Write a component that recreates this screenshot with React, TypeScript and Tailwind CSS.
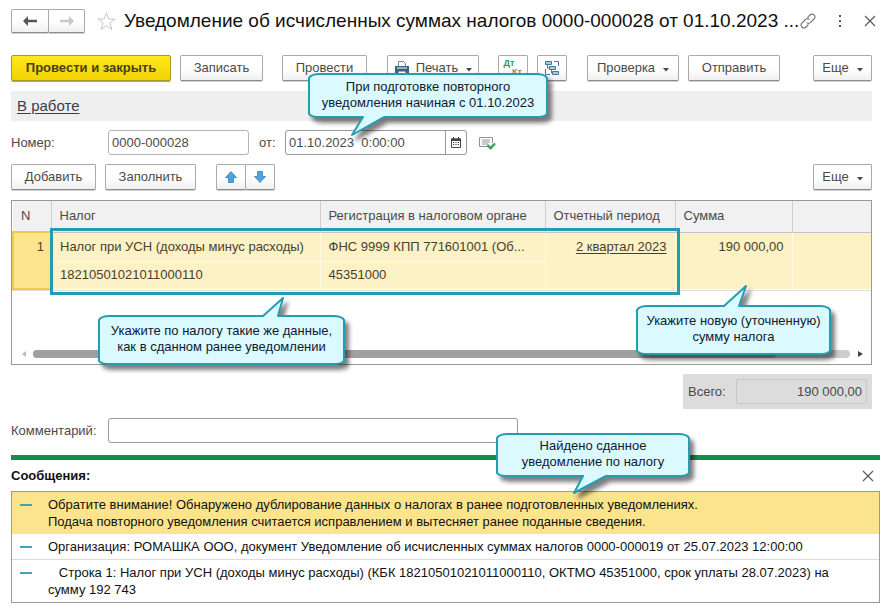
import type { ReactNode } from 'react';

const BUTTON = 'flex items-center justify-center rounded-[2px] border border-[#a9a9a9] border-b-[#8c8c8c] bg-linear-to-b from-white from-50% to-[#f0f0f0] text-[#4a4a4a] whitespace-nowrap shadow-[0_1px_0_#d0d0d0]';

// small triangle of the drop-down buttons
function Caret() {
    return (
        <svg className="mt-1 ml-2" width="6" height="4" viewBox="0 0 6 4" aria-hidden="true">
            <path d="M0 0h6L3 3.5z" fill="#4a4a4a" />
        </svg>
    );
}

function CloseIcon() {
    return (
        <svg width="12" height="12" viewBox="0 0 12 12" aria-hidden="true">
            <path d="M1 1l10 10M11 1L1 11" stroke="#555" strokeWidth="1.1" />
        </svg>
    );
}

interface CalloutProps {
    width: number;
    height: number;
    // three points: start of the tail, its tip, its end
    tail: [number, number][];
    side: 'top' | 'bottom';
    className: string;
    children: ReactNode;
}

function Callout({ width: w, height: h, tail, side, className, children }: CalloutProps) {
    const points = tail.map((p) => `L${p[0]} ${p[1]}`).join(' ');
    const top = side === 'top' ? points : '';
    const bottom = side === 'bottom' ? points : '';
    const d = `M1 5 Q3 1 12 1 ${top} L${w - 12} 1 Q${w - 3} 1 ${w - 1} 5 L${w - 1} ${h - 4} Q${w - 3} ${h - 1} ${w - 12} ${h - 1} ${bottom} L12 ${h - 1} Q3 ${h - 1} 1 ${h - 4} Z`;

    return (
        <div
            className={`absolute z-10 flex items-center justify-center pb-0.5 text-center leading-4 whitespace-nowrap text-[#101830] ${className}`}
            style={{ width: w, height: h }}
        >
            <svg className="absolute inset-0 overflow-visible drop-shadow-[4px_5px_2px_rgba(0,0,0,0.5)]" width={w} height={h} aria-hidden="true">
                <path d={d} fill="#dafaff" stroke="#239db1" strokeWidth="2" strokeLinejoin="round" />
            </svg>
            <p className="relative">{children}</p>
        </div>
    );
}

function Message({ active, children }: { active?: boolean; children: ReactNode }) {
    return (
        <li className={`flex items-start py-1 pr-4 leading-[17px] ${active ? 'bg-[#fce48c]' : 'border-b border-[#dcdcdc] bg-white last:border-b-0'}`}>
            <span className="mt-2 mr-4 ml-2 h-0.5 w-3 flex-none bg-[#46a0c0]" />
            <p className="whitespace-pre-wrap">{children}</p>
        </li>
    );
}

export default function App() {
    return (
        <main className="min-h-screen bg-white pt-[9px] pr-3 pl-[11px] font-['Liberation_Sans',Arial,sans-serif] text-[13px] leading-4 text-[#4a4a4a]">
            <div className="pr-2">
                {/* Title */}
                <header className="flex h-6 items-center">
                    <div className="flex flex-none">
                        <button aria-label="Назад" className={`${BUTTON} h-6 w-[38px]`}>
                            <svg width="14" height="10" viewBox="0 0 14 10" aria-hidden="true">
                                <path d="M0 5l5-5v3.8h9v2.4H5V10z" fill="#555" />
                            </svg>
                        </button>
                        <button aria-label="Вперед" className={`${BUTTON} -ml-px h-6 w-[37px]`}>
                            <svg width="14" height="10" viewBox="0 0 14 10" aria-hidden="true">
                                <path d="M14 5L9 0v3.8H0v2.4h9V10z" fill="#c8c8c8" />
                            </svg>
                        </button>
                    </div>
                    <button aria-label="В избранное" className="ml-3 flex-none">
                        <svg width="19" height="19" viewBox="0 0 19 19" aria-hidden="true">
                            <path d="M9.5 1l2.3 6h6.2l-5 3.9 1.9 6.6-5.4-4-5.4 4L6 10.9 1 7h6.2z" fill="#fff" stroke="#c6c6c6" />
                        </svg>
                    </button>
                    <h1 className="ml-2 min-w-0 truncate text-[19px] leading-6 text-[#111]">
                        Уведомление об исчисленных суммах налогов 0000-000028 от 01.10.2023 ...
                    </h1>
                    <div className="ml-auto flex flex-none items-center gap-4">
                        <button aria-label="Получить ссылку">
                            <svg width="16" height="16" viewBox="0 0 16 16" fill="none" stroke="#777" strokeWidth="1.1" aria-hidden="true">
                                <path d="M7.500 4.500L10 2a2.700 2.700 0 0 1 4 4l-3.500 3.500a2.700 2.700 0 0 1-4 0" />
                                <path d="M8.500 11.500L6 14a2.700 2.700 0 0 1-4-4l3.500-3.500a2.700 2.700 0 0 1 4 0" />
                            </svg>
                        </button>
                        <button aria-label="Меню" className="flex w-4 justify-center">
                            <svg width="4" height="12" viewBox="0 0 4 12" fill="#555" aria-hidden="true">
                                <path d="M1 0h2v2H1zM1 5h2v2H1zM1 10h2v2H1z" />
                            </svg>
                        </button>
                        <button aria-label="Закрыть" className="-mr-1">
                            <CloseIcon />
                        </button>
                    </div>
                </header>

                {/* Command bar */}
                <div className="mt-[22px] flex items-center">
                    <button className="flex h-[26px] w-40 items-center justify-center rounded-[2px] border border-[#a8972c] bg-linear-to-b from-[#ffe81a] to-[#f2d300] font-bold whitespace-nowrap text-[#44401c] shadow-[0_1px_0_#c9b000]">
                        Провести и закрыть
                    </button>
                    <button className={`${BUTTON} ml-[9px] h-[26px] w-[83px]`}>Записать</button>
                    <button className={`${BUTTON} ml-[19px] h-[26px] w-[85px]`}>Провести</button>
                    <button className={`${BUTTON} ml-5 h-[26px] w-[92px]`}>
                        <svg className="mr-1.5" width="16" height="16" viewBox="0 0 16 16" aria-hidden="true">
                            <path d="M4.500 7V1.500h5l2 2V7" fill="#fff" stroke="#5a9a78" />
                            <path d="M1 6h14v7H1z" fill="#3d6182" />
                            <path d="M3 8h10" stroke="#fff" />
                            <path d="M4 11h8v4H4z" fill="#fff" stroke="#3d6182" />
                        </svg>
                        Печать
                        <Caret />
                    </button>
                    <button aria-label="Дт Кт" className={`${BUTTON} ml-[19px] h-[26px] w-[30px]`}>
                        <span className="grid text-[9px] leading-[9px] font-bold">
                            <span className="pr-2 text-[#1f9a58]">Дт</span>
                            <span className="pl-2 text-[#b07a60]">Кт</span>
                        </span>
                    </button>
                    <button aria-label="Структура подчиненности" className={`${BUTTON} ml-[9px] h-[26px] w-[30px]`}>
                        <svg width="16" height="16" viewBox="0 0 16 16" fill="none" stroke="#44799c" aria-hidden="true">
                            <path d="M10 1.500h4.500V6M1.500 9v5.500H6" />
                            <path d="M1.500 1.500h6v3h-6zM5.500 6.500h6v3h-6zM8.500 11.500h6v3h-6z" fill="#a9cbe0" />
                            <path d="M3.500 5v3h2M7.500 10v3h1" />
                        </svg>
                    </button>
                    <button className={`${BUTTON} ml-5 h-[26px] w-[92px]`}>Проверка<Caret /></button>
                    <button className={`${BUTTON} ml-[9px] h-[26px] w-[92px]`}>Отправить</button>
                    <button className={`${BUTTON} ml-auto h-[26px] w-[59px]`}>Еще<Caret /></button>
                </div>

                <div className="mt-[10px] flex h-[30px] items-center bg-[#efefef] pl-1.5 text-[15px]">
                    <a href="#status" className="text-[#3c3c4c] underline underline-offset-2">В работе</a>
                </div>

                {/* Number and date */}
                <div className="mt-[9px] flex h-[25px] items-center">
                    <label htmlFor="number" className="w-[97px] flex-none">Номер:</label>
                    <input
                        id="number"
                        defaultValue="0000-000028"
                        className="h-[25px] w-[141px] rounded-[3px] border border-[#b4b4b4] px-[3px] text-[#4a4a4a]"
                    />
                    <label htmlFor="date" className="ml-[10px] w-[26px] flex-none">от:</label>
                    <div className="relative flex h-[25px] w-[182px] flex-none rounded-[3px] border border-[#999]">
                        <input id="date" defaultValue="01.10.2023  0:00:00" className="w-40 border-r border-[#999] px-[3px] text-[#4a4a4a]" />
                        <button aria-label="Выбрать дату" className="flex flex-1 items-center justify-center">
                            <svg width="10" height="11" viewBox="0 0 10 11" aria-hidden="true">
                                <path d="M.5 2h9v8.500h-9z" fill="#fff" stroke="#444" />
                                <path d="M0 1.500h10V4H0zM2 0h1v2H2zM7 0h1v2H7z" fill="#444" />
                                <path d="M2 5.500h6M2 7.500h6" stroke="#444" strokeDasharray="1.200 1.200" />
                            </svg>
                        </button>
                        <Callout width={240} height={45} side="bottom" tail={[[76, 44], [44, 62], [55, 44]]} className="-top-[58px] left-[22px]">
                            При подготовке повторного
                            <br />
                            уведомления начиная с 01.10.2023
                        </Callout>
                    </div>
                    <svg className="ml-3 flex-none" width="17" height="14" viewBox="0 0 17 14" fill="none" aria-hidden="true">
                        <path d="M10 10.500H.5v-9h13V7" stroke="#8d949a" />
                        <path d="M3 4h8M3 6h8M3 8h6" stroke="#8d949a" />
                        <path d="M8.500 9l3 3.200L16 7.500" stroke="#3ba05c" strokeWidth="2.400" />
                    </svg>
                </div>

                {/* Row commands */}
                <div className="mt-[9px] flex items-center">
                    <button className={`${BUTTON} h-[26px] w-[85px]`}>Добавить</button>
                    <button className={`${BUTTON} ml-[9px] h-[26px] w-[91px]`}>Заполнить</button>
                    <button aria-label="Вверх" className={`${BUTTON} ml-5 h-[26px] w-[30px]`}>
                        <svg width="12" height="12" viewBox="0 0 12 12" aria-hidden="true">
                            <path d="M6 .5l5.500 6H8.500v5h-5v-5H.5z" fill="#4ba5dc" stroke="#3581b0" strokeWidth=".8" />
                        </svg>
                    </button>
                    <button aria-label="Вниз" className={`${BUTTON} -ml-px h-[26px] w-[30px]`}>
                        <svg width="12" height="12" viewBox="0 0 12 12" aria-hidden="true">
                            <path d="M6 11.500l5.500-6H8.500v-5h-5v5H.5z" fill="#4ba5dc" stroke="#3581b0" strokeWidth=".8" />
                        </svg>
                    </button>
                    <button className={`${BUTTON} ml-auto h-[26px] w-[59px]`}>Еще<Caret /></button>
                </div>

                {/* Taxes */}
                <section className="relative mt-[10px] border border-[#999] bg-white">
                    <table className="w-full table-fixed border-collapse">
                        <colgroup>
                            <col className="w-[38px]" />
                            <col className="w-[269px]" />
                            <col className="w-[225px]" />
                            <col className="w-[130px]" />
                            <col className="w-[117px]" />
                            <col />
                        </colgroup>
                        <thead>
                            <tr className="h-[31px] border-b border-[#c4c4c4] bg-[#f1f1f1] text-left">
                                <th className="border-r border-[#cfcfcf] px-2 font-normal">N</th>
                                <th className="border-r border-[#cfcfcf] px-2 font-normal">Налог</th>
                                <th className="border-r border-[#cfcfcf] px-2 font-normal whitespace-nowrap">Регистрация в налоговом органе</th>
                                <th className="border-r border-[#cfcfcf] px-2 font-normal whitespace-nowrap">Отчетный период</th>
                                <th className="border-r border-[#cfcfcf] px-2 font-normal">Сумма</th>
                                <th />
                            </tr>
                        </thead>
                        <tbody className="bg-[#fdf1c6] text-[#45412f]">
                            <tr className="h-[29px]">
                                <td rowSpan={2} className="border-2 border-[#f0cb45] bg-[#fce48c] px-1.5 pt-1.5 text-right align-top">1</td>
                                <td className="border-r border-b border-[#fffaea] px-2 whitespace-nowrap">Налог при УСН (доходы минус расходы)</td>
                                <td className="truncate border-r border-b border-[#fffaea] px-2">ФНС 9999 КПП 771601001 (Об...</td>
                                <td rowSpan={2} className="border-r border-[#fffaea] px-2 pt-1.5 text-right align-top whitespace-nowrap">
                                    <a href="#period" className="underline underline-offset-2">2 квартал 2023</a>
                                </td>
                                <td rowSpan={2} className="border-r border-[#fffaea] px-2 pt-1.5 text-right align-top">190 000,00</td>
                                <td rowSpan={2} />
                            </tr>
                            <tr className="h-[28px]">
                                <td className="border-r border-[#fffaea] px-2">18210501021011000110</td>
                                <td className="border-r border-[#fffaea] px-2">45351000</td>
                            </tr>
                        </tbody>
                    </table>
                    <div className="flex items-center border-t border-[#ddd] pt-[59px] pr-2 pb-1.5 pl-[10px]">
                        <svg width="4" height="6" viewBox="0 0 4 6" aria-hidden="true">
                            <path d="M4 0v6L0 3z" fill="#bbb" />
                        </svg>
                        <div className="mr-2 ml-[7px] h-2 flex-1 rounded-full bg-[#cdcdcd]">
                            <div className="h-2 w-[91%] rounded-full bg-[#a0a0a0]" />
                        </div>
                        <svg width="5" height="6" viewBox="0 0 5 6" aria-hidden="true">
                            <path d="M0 0v6l5-3z" fill="#444" />
                        </svg>
                    </div>

                    {/* frame round the cells being explained */}
                    <div className="pointer-events-none absolute top-[27px] left-[38px] h-[67px] w-[630px] border-3 border-[#239bb0]" />
                    <Callout width={247} height={50} side="top" tail={[[165, 1], [185, -17], [180, 1]]} className="top-[114px] left-[86px]">
                        Укажите по налогу такие же данные,
                        <br />
                        как в сданном ранее уведомлении
                    </Callout>
                    <Callout width={195} height={50} side="top" tail={[[88, 1], [110, -19], [103, 1]]} className="top-[104px] right-10">
                        Укажите новую (уточненную)
                        <br />
                        сумму налога
                    </Callout>
                </section>

                <div className="mt-[9px] ml-auto flex h-[35px] w-[189px] items-center bg-[#dcdcdc] pr-[5px] pl-[5px]">
                    <label htmlFor="total" className="w-12 flex-none">Всего:</label>
                    <input
                        id="total"
                        readOnly
                        value="190 000,00"
                        className="h-[25px] min-w-0 flex-1 rounded-[2px] border border-[#c8c8c8] bg-[#dcdcdc] px-1 text-right text-[#4a4a4a]"
                    />
                </div>

                <div className="mt-[9px] flex h-[25px] items-center">
                    <label htmlFor="comment" className="w-[97px] flex-none">Комментарий:</label>
                    <input id="comment" className="h-[25px] w-[410px] rounded-[3px] border border-[#999] px-[3px]" />
                </div>
            </div>

            {/* Messages */}
            <section className="relative mt-3 border-t-5 border-[#108f4c] text-[#111]">
                <div className="flex h-[31px] items-center justify-between pr-1.5">
                    <h2 className="font-bold">Сообщения:</h2>
                    <button aria-label="Закрыть сообщения">
                        <CloseIcon />
                    </button>
                </div>
                <ul className="border border-[#999]">
                    <Message active>
                        Обратите внимание! Обнаружено дублирование данных о налогах в ранее подготовленных уведомлениях.
                        <br />
                        Подача повторного уведомления считается исправлением и вытесняет ранее поданные сведения.
                    </Message>
                    <Message>Организация: РОМАШКА ООО, документ Уведомление об исчисленных суммах налогов 0000-000019 от 25.07.2023 12:00:00</Message>
                    <Message>{'   Строка 1: Налог при УСН (доходы минус расходы) (КБК 18210501021011000110, ОКТМО 45351000, срок уплаты 28.07.2023) на сумму 192 743'}</Message>
                </ul>
                <Callout width={194} height={44} side="bottom" tail={[[110, 43], [78, 60], [87, 43]]} className="-top-[27px] left-[485px]">
                    Найдено сданное
                    <br />
                    уведомление по налогу
                </Callout>
            </section>
        </main>
    );
}
